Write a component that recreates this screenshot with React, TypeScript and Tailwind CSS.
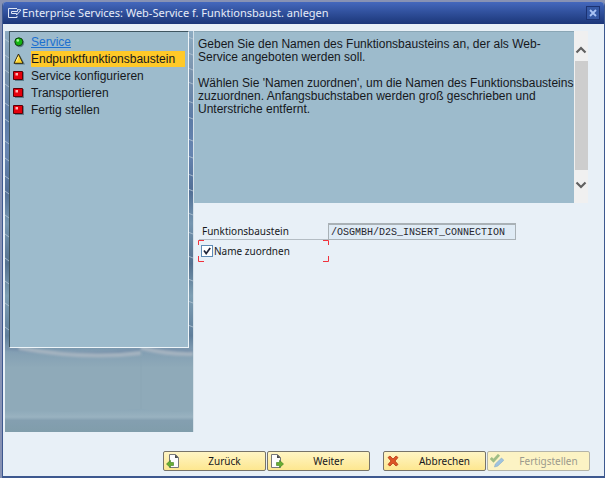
import { ReactNode, useState } from 'react';
import clsx from 'clsx';

type StepState = 'done' | 'active' | 'open';

interface Step {
  label: string;
  state: StepState;
}

const steps: Step[] = [
  { label: 'Service', state: 'done' },
  { label: 'Endpunktfunktionsbaustein', state: 'active' },
  { label: 'Service konfigurieren', state: 'open' },
  { label: 'Transportieren', state: 'open' },
  { label: 'Fertig stellen', state: 'open' },
];

function StepIcon({ state }: { state: StepState }) {
  return (
    <svg viewBox="0 0 12 12" className="size-3 shrink-0">
      {state === 'done' && (
        <>
          <circle cx="6.8" cy="6.8" r="4.4" fill="#5d7c8b" />
          <circle cx="5.8" cy="5.8" r="4" fill="#12b512" stroke="#123c12" />
          <circle cx="4.8" cy="4.4" r="1.3" fill="#a4f79a" />
        </>
      )}
      {state === 'active' && (
        <>
          <path d="M7 2.5 12 11.5H2Z" fill="#5d7c8b" />
          <path d="M5.5 1 10 10.3H1Z" fill="#ffd62e" stroke="#2d2712" />
          <path d="M5.3 3.8 3.3 8.4" stroke="#fff6b8" />
        </>
      )}
      {state === 'open' && (
        <>
          <path d="M2 2h9v9H2z" fill="#5d7c8b" />
          <path d="M.5 1.5h9v8h-9z" fill="#e5000c" stroke="#5c0008" />
          <path d="M2.5 3h2.5v2.5H2.5z" fill="#ffb8b8" />
        </>
      )}
    </svg>
  );
}

/** Rippled water behind the step list */
function WaterBackground() {
  const lines = [8, 24, 39, 53, 72, 88, 110, 127, 145, 160, 184, 203, 227, 250, 272, 296];
  return (
    <svg
      viewBox="0 0 188 401"
      preserveAspectRatio="none"
      className="absolute inset-0 size-full"
      aria-hidden="true"
    >
      <defs>
        <linearGradient id="water" x1="0" y1="0" x2="0" y2="1">
          <stop offset="0" stopColor="#8eacc2" />
          <stop offset="0.1" stopColor="#7b94ae" />
          <stop offset="0.22" stopColor="#5c7ba6" />
          <stop offset="0.3" stopColor="#6785b1" />
          <stop offset="0.4" stopColor="#526f96" />
          <stop offset="0.48" stopColor="#7596b0" />
          <stop offset="0.58" stopColor="#54718f" />
          <stop offset="0.66" stopColor="#7d9eb3" />
          <stop offset="0.76" stopColor="#5f7e9b" />
          <stop offset="0.8" stopColor="#839fb3" />
          <stop offset="0.84" stopColor="#8faab9" />
          <stop offset="1" stopColor="#8faab9" />
        </linearGradient>
        <linearGradient id="shore" x1="0" y1="0" x2="0" y2="1">
          <stop offset="0" stopColor="#8ca8b8" />
          <stop offset="0.35" stopColor="#99b2c0" />
          <stop offset="0.5" stopColor="#849fb0" />
          <stop offset="1" stopColor="#809dab" />
        </linearGradient>
        <filter id="soft" x="-10%" y="-60%" width="120%" height="220%">
          <feGaussianBlur stdDeviation="1" />
        </filter>
      </defs>
      <path d="M0 0h188v401H0z" fill="url(#water)" />
      {lines.map((y) => (
        <g key={y} fill="none" stroke="#b4c6d4" strokeOpacity="0.8">
          <path d={`M0 ${y}l4 3`} />
          <path d={`M183 ${y - 2}l5 2`} />
        </g>
      ))}
      <g filter="url(#soft)" fill="none">
        <path d="M0 317q80 10 136 1" stroke="#7892ab" strokeWidth="3" />
        <path d="M136 317q30 1 52 3" stroke="#7892ab" strokeWidth="3" />
        <path d="M14 317q66 12 122 5" stroke="#a4b3c0" strokeWidth="4" />
        <path d="M136 317q30 7 52 6" stroke="#a4b3c0" strokeWidth="4" />
      </g>
      <path d="M136 320v60" stroke="#89a5b4" strokeOpacity="0.5" />
      <path d="M0 379q70 4 136-1 25 4 52 2v21H0z" fill="url(#shore)" />
    </svg>
  );
}

function StepList() {
  return (
    <nav className="relative flex w-[189px] shrink-0 flex-col border-r border-[#d5e1e9] pr-1 pl-1">
      <WaterBackground />
      <ol className="relative h-[317px] border-t border-r border-b border-l border-t-[#3f5560] border-r-[#edf4f8] border-b-[#edf4f8] border-l-[#3f5560] bg-[#9dbbcc] pt-px pr-[3px] pl-[3px] font-['Liberation_Sans',sans-serif] text-[12px]">
        {steps.map((step) => (
          <li key={step.label} className="flex h-[17px] items-center gap-[6px]">
            <StepIcon state={step.state} />
            <span
              className={clsx(
                'flex-1 leading-4 whitespace-nowrap',
                step.state === 'active' && 'bg-[#ffc928]',
              )}
            >
              {step.state === 'done' ? (
                <a href="#service" className="text-[#1c70d0] underline">
                  {step.label}
                </a>
              ) : (
                step.label
              )}
            </span>
          </li>
        ))}
      </ol>
    </nav>
  );
}

function HelpText() {
  return (
    <section className="mr-4 flex h-[172px]">
      <div className="min-w-0 flex-1 border-t border-[#8aa6b5] bg-[#9dbbcc] pt-[6px] pl-1 font-['Liberation_Sans',sans-serif] text-[12px] leading-[13px] whitespace-nowrap">
        <p>
          Geben Sie den Namen des Funktionsbausteins an, der als Web-
          <br />
          Service angeboten werden soll.
        </p>
        <p className="mt-[13px]">
          Wählen Sie 'Namen zuordnen', um die Namen des Funktionsbausteins
          <br />
          zuzuordnen. Anfangsbuchstaben werden groß geschrieben und
          <br />
          Unterstriche entfernt.
        </p>
      </div>
      <div className="flex w-[14px] shrink-0 flex-col bg-[#f0f0f0]">
        <button aria-label="Nach oben" className="flex h-[30px] items-center justify-center pt-2">
          <svg viewBox="0 0 12 8" className="h-2 w-3">
            <path d="M1.5 6.5 6 2l4.5 4.5" fill="none" stroke="#606060" strokeWidth="2.2" />
          </svg>
        </button>
        <div className="ml-px flex-1 bg-[#cdcdcd]" />
        <button aria-label="Nach unten" className="flex h-[33px] items-center justify-center pb-1">
          <svg viewBox="0 0 12 8" className="h-2 w-3">
            <path d="M1.5 1.5 6 6l4.5-4.5" fill="none" stroke="#606060" strokeWidth="2.2" />
          </svg>
        </button>
      </div>
    </section>
  );
}

function ModuleForm() {
  const [assignName, setAssignName] = useState(true);

  return (
    <form className="mt-5 ml-[5px]">
      <div className="flex h-[17px]">
        <label
          htmlFor="module"
          className="w-[129px] border-b border-[#b4bdc4] pl-[3px] leading-4"
        >
          Funktionsbaustein
        </label>
        <input
          id="module"
          readOnly
          value="/OSGMBH/D2S_INSERT_CONNECTION"
          className="w-[188px] border border-t-2 border-[#a9b1b6] bg-[#dfebf5] px-[2px] font-['Liberation_Mono',monospace] text-[10px] text-[#26262e] outline-none"
        />
      </div>
      <div className="relative flex h-[22px] w-[131px] items-center -ml-px pl-[3px]">
        <svg viewBox="0 0 131 22" className="absolute inset-0 size-full" aria-hidden="true">
          <path
            d="M.5 5V.5H6M125 .5h5.5V5M130.5 16v5.5H125M6 21.5H.5V16"
            fill="none"
            stroke="#f0323c"
          />
        </svg>
        <span className="relative size-3 shrink-0">
          <input
            id="assign"
            type="checkbox"
            checked={assignName}
            onChange={(e) => setAssignName(e.target.checked)}
            className="block size-3 appearance-none border border-[#5f8bb5] bg-white"
          />
          {assignName && (
            <svg viewBox="0 0 12 12" className="pointer-events-none absolute inset-0 size-3">
              <path d="M3 5.5 5.2 8.5 9.2 3" fill="none" stroke="#22263a" strokeWidth="1.7" />
            </svg>
          )}
        </span>
        <label htmlFor="assign" className="relative ml-px">
          Name zuordnen
        </label>
      </div>
    </form>
  );
}

function PageIcon({ back }: { back?: boolean }) {
  return (
    <svg viewBox="0 0 14 14" className="size-[14px]">
      <path
        d={back ? 'M3.5.5h6l3 3v10h-9z' : 'M1.5.5h6l3 3v10h-9z'}
        fill="#fdfdfd"
        stroke="#77787a"
      />
      <path
        d={back ? 'M9 .5v3.5h3.5z' : 'M7 .5v3.5h3.5z'}
        fill="#4a4a4a"
      />
      <path
        d={
          back
            ? 'M.5 10 4.5 6.3v2.2h3v3h-3v2.2z'
            : 'M13.5 10 9.5 6.3v2.2h-3v3h3v2.2z'
        }
        fill="#67ad32"
        stroke="#3d7d1d"
        strokeWidth=".6"
      />
    </svg>
  );
}

function CancelIcon() {
  return (
    <svg viewBox="0 0 14 14" className="size-[14px]">
      <path
        d="M2 3.5 4 2l3 3 3-3 2 1.5L9 7l3 3.5-2 1.5-3-3-3 3-2-1.5L5 7z"
        fill="#dd5426"
        stroke="#b43c16"
        strokeWidth=".8"
      />
    </svg>
  );
}

function FinishIcon() {
  return (
    <svg viewBox="0 0 14 14" className="size-[14px]">
      <path d="M.8 4 3.5 6.8 9 .8" fill="none" stroke="#9fbd85" strokeWidth="2.8" />
      <path d="M4.5 13l.8-3L11.5 4l2.3 2.3L7.8 12z" fill="#9fc3df" stroke="#84a9ca" strokeWidth=".6" />
    </svg>
  );
}

interface WizardButtonProps {
  icon: ReactNode;
  disabled?: boolean;
  children: ReactNode;
}

function WizardButton({ icon, disabled, children }: WizardButtonProps) {
  return (
    <button
      disabled={disabled}
      className={clsx(
        'flex h-5 w-[103px] items-center rounded-xs border pl-[2px]',
        disabled
          ? 'border-[#b4b4a8] bg-[#fcf3c4] text-[#9b9a8c]'
          : 'border-[#77746a] bg-linear-to-b from-[#fff5c4] to-[#fde78f]',
      )}
    >
      {icon}
      <span className="flex-1 pl-1 text-center">{children}</span>
    </button>
  );
}

function App() {
  return (
    <div className="flex min-h-screen flex-col bg-[#8792b4] pt-[2px] pl-[2px] font-['Noto_Sans',sans-serif] text-[10px] text-[#16181c]">
      <div className="flex flex-1 flex-col overflow-hidden rounded-t border-r border-b-2 border-l border-[#3d588f] bg-[#e8f0f7]">
        <header className="flex h-[22px] items-center bg-linear-to-b from-[#4468bd] to-[#1c3779] pr-1 pl-[5px] text-[#e6ecf8]">
          <svg
            viewBox="0 0 14 12"
            className="h-3 w-[14px] shrink-0"
            fill="none"
            stroke="#dde5f5"
          >
            <path d="M9 1.5H.5v9h8.5V9" />
            <path d="M3.5 4.5h6V2.5L13 3 8.5 8V6.5h-5z" />
          </svg>
          <h1 className="flex-1 text-[11px]">
            Enterprise Services: Web-Service f. Funktionsbaust. anlegen
          </h1>
          <button
            aria-label="Schließen"
            className="flex size-[14px] items-center justify-center border border-[#1b3272] bg-[#3558a5]"
          >
            <svg viewBox="0 0 8 8" className="size-2">
              <path d="M1 1l6 6M7 1 1 7" stroke="#a9c3f5" strokeWidth="1.8" />
            </svg>
          </button>
        </header>
        <main className="flex flex-1 pt-[7px] pl-[2px]">
          <StepList />
          <div className="min-w-0 flex-1">
            <HelpText />
            <ModuleForm />
          </div>
        </main>
        <footer className="flex justify-end gap-[13px] pt-[19px] pr-[14px] pb-[5px]">
          <div className="flex gap-px">
            <WizardButton icon={<PageIcon back />}>Zurück</WizardButton>
            <WizardButton icon={<PageIcon />}>Weiter</WizardButton>
          </div>
          <div className="flex gap-px">
            <WizardButton icon={<CancelIcon />}>Abbrechen</WizardButton>
            <WizardButton icon={<FinishIcon />} disabled>
              Fertigstellen
            </WizardButton>
          </div>
        </footer>
      </div>
    </div>
  );
}

export default App;
